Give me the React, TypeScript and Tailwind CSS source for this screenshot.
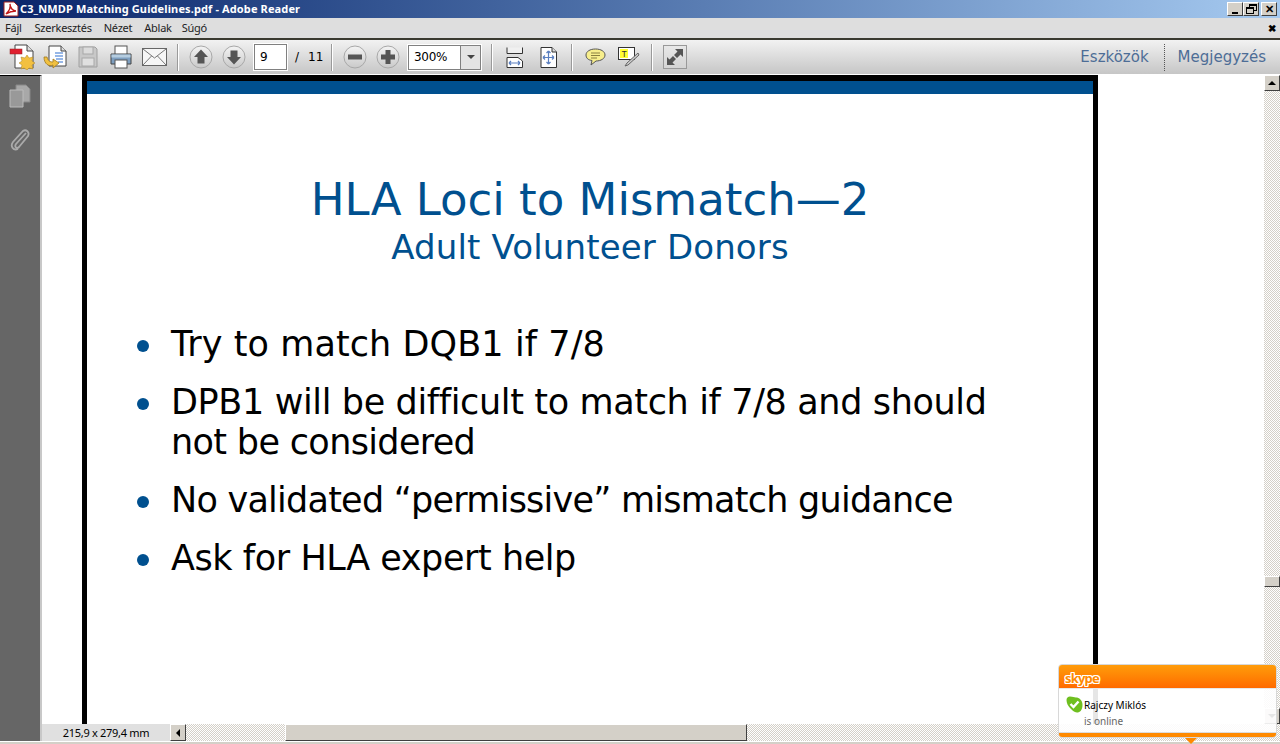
import React from 'react';

const checker = 'bg-[repeating-conic-gradient(#d4d0c8_0_25%,#ffffff_0_50%)] bg-[length:2px_2px]';
const raised = 'border border-t-white border-l-white border-r-[#404040] border-b-[#404040] bg-[#d4d0c8]';

const Sep: React.FC<{ ml: number }> = ({ ml }) => (
  <div className="w-[2px] h-[27px] bg-[#9a9a9a] border-r border-white" style={{ marginLeft: ml }} />
);

const RoundBtn: React.FC<{ kind: 'up' | 'down' | 'minus' | 'plus'; ml: number }> = ({ kind, ml }) => (
  <svg width="24" height="24" viewBox="0 0 24 24" style={{ marginLeft: ml }}>
    <defs>
      <linearGradient id="rb" x1="0" y1="0" x2="0" y2="1">
        <stop offset="0" stopColor="#f4f4f4" />
        <stop offset="1" stopColor="#c9c9c9" />
      </linearGradient>
    </defs>
    <circle cx="12" cy="12" r="11" fill="url(#rb)" stroke="#a8a8a8" />
    {kind === 'up' && <path d="M12 4.5 L19 12 H15.5 V18.5 H8.5 V12 H5 Z" fill="#555" />}
    {kind === 'down' && <path d="M12 19.5 L19 12 H15.5 V5.5 H8.5 V12 H5 Z" fill="#555" />}
    {kind === 'minus' && <rect x="5" y="9.5" width="14" height="5" fill="#555" />}
    {kind === 'plus' && <path d="M9.5 5 H14.5 V9.5 H19 V14.5 H14.5 V19 H9.5 V14.5 H5 V9.5 H9.5 Z" fill="#555" />}
  </svg>
);

const Toolbar = () => (
  <div className="h-[37px] shrink-0 border-t-2 border-[#3a3a30] bg-gradient-to-b from-[#f2f2f2] to-[#c6c6c6] border-b border-b-white flex items-center font-['DejaVu_Sans',sans-serif] text-[12px] text-black">
    {/* create */}
    <svg width="26" height="26" viewBox="0 0 26 26" className="ml-[9px]">
      <path d="M6 1 H18 L24 7 V24 H6 Z" fill="#fff" stroke="#444" />
      <path d="M18 1 V7 H24" fill="#ddd" stroke="#444" />
      <rect x="1" y="5" width="12" height="5" fill="#e02030" stroke="#902020" strokeWidth="0.5" />
      <path d="M18 11 L20 14 L24 13 L23 17 L26 19 L23 21 L24 25 L20 24 L18 26 L15 24 L12 25 L13 21 L10 19 L13 17 L12 13 L16 14 Z" fill="#f2c040" stroke="#a88020" strokeWidth="0.5" />
    </svg>
    {/* open */}
    <svg width="24" height="24" viewBox="0 0 24 24" className="ml-[8px]">
      <path d="M6 1 H18 L23 6 V21 H6 Z" fill="#fff" stroke="#444" />
      <path d="M18 1 V6 H23" fill="#ddd" stroke="#444" />
      <path d="M12 8 H20 M12 11 H20 M13 14 H20 M15 17 H20" stroke="#3070d0" strokeWidth="1.2" />
      <path d="M1 12 C1 19 6 22 10 20 V23 L16 18 L10 14 V17 C7 17 5 16 4 12 Z" fill="#f0c040" stroke="#a07820" strokeWidth="0.8" />
    </svg>
    {/* save (disabled) */}
    <svg width="20" height="22" viewBox="0 0 20 22" className="ml-[11px]">
      <path d="M1 1 H17 L19 3 V21 H1 Z" fill="#c8c8c8" stroke="#a0a0a0" />
      <rect x="5" y="1" width="10" height="7" fill="#dcdcdc" stroke="#a8a8a8" />
      <rect x="4" y="12" width="12" height="8" fill="#e0e0e0" stroke="#a8a8a8" />
    </svg>
    {/* print */}
    <svg width="24" height="24" viewBox="0 0 24 24" className="ml-[11px]">
      <rect x="6" y="1" width="12" height="9" fill="#fff" stroke="#555" />
      <path d="M2 9 H22 V19 H2 Z" fill="#7e9fc0" stroke="#444" />
      <rect x="2.5" y="9.5" width="19" height="3" fill="#b5cde0" />
      <rect x="6" y="15" width="12" height="8" fill="#fff" stroke="#555" />
    </svg>
    {/* mail */}
    <svg width="25" height="18" viewBox="0 0 25 18" className="ml-[9px]">
      <rect x="0.5" y="0.5" width="24" height="17" fill="#f6f6f6" stroke="#666" />
      <path d="M1 1 L12.5 10 L24 1 M1 17 L9.5 8 M24 17 L15.5 8" fill="none" stroke="#777" />
    </svg>
    <Sep ml={10} />
    <RoundBtn kind="up" ml={10} />
    <RoundBtn kind="down" ml={9} />
    <div className="ml-[8px] w-[33px] h-[26px] border border-[#808080] outline outline-1 outline-white bg-white pl-[5px] leading-[24px]">9</div>
    <span className="ml-[8px] w-[4px]">/</span>
    <span className="ml-[9px] w-[15px]">11</span>
    <Sep ml={8} />
    <RoundBtn kind="minus" ml={10} />
    <RoundBtn kind="plus" ml={9} />
    <div className="ml-[8px] w-[73px] h-[25px] border border-[#808080] outline outline-1 outline-white bg-white flex leading-[23px]">
      <span className="pl-[5px] w-[51px] tracking-[-0.3px]">300%</span>
      <div className="flex-1 border-l border-[#808080] bg-[#e4e4e4] flex items-center justify-center">
        <div className="w-0 h-0 border-x-[4px] border-x-transparent border-t-[4px] border-t-[#444]" />
      </div>
    </div>
    <Sep ml={10} />
    {/* fit width */}
    <svg width="18" height="21" viewBox="0 0 18 21" className="ml-[13px]">
      <path d="M1 0.5 V6.5 H16.5 V0.5" fill="#f0f0f0" stroke="#333" />
      <path d="M1 10.5 H12 L16.5 14 V20.5 H1 Z" fill="#fff" stroke="#333" />
      <path d="M3 16 H14 M3 16 L5 14 M3 16 L5 18 M14 16 L12 14 M14 16 L12 18" stroke="#5a7fc0" strokeWidth="1.2" fill="none" />
    </svg>
    {/* fit page */}
    <svg width="18" height="21" viewBox="0 0 18 21" className="ml-[16px]">
      <path d="M1 0.5 H12 L16.5 5 V20.5 H1 Z" fill="#fff" stroke="#333" />
      <path d="M12 0.5 V5 H16.5" fill="#ddd" stroke="#333" />
      <path d="M8.5 4 V17 M8.5 4 L6.5 6 M8.5 4 L10.5 6 M8.5 17 L6.5 15 M8.5 17 L10.5 15 M3 10.5 H14 M3 10.5 L5 8.5 M3 10.5 L5 12.5 M14 10.5 L12 8.5 M14 10.5 L12 12.5" stroke="#5a7fc0" strokeWidth="1.2" fill="none" />
    </svg>
    <Sep ml={13} />
    {/* comment */}
    <svg width="21" height="18" viewBox="0 0 21 18" className="ml-[12px]">
      <path d="M10.5 1 C16 1 20 3.5 20 7 C20 10.5 16 13 11 13 L6 17 L7 12.5 C3 12 1 10 1 7 C1 3.5 5 1 10.5 1 Z" fill="#f7ee8c" stroke="#555" />
      <path d="M6 5 H15 M6 7.5 H15 M6 10 H12" stroke="#8a8040" />
    </svg>
    {/* highlight */}
    <svg width="22" height="20" viewBox="0 0 22 20" className="ml-[12px]">
      <rect x="0.5" y="0.5" width="16" height="12" fill="#fff" stroke="#333" />
      <rect x="2" y="2" width="8" height="9" fill="#ffff30" />
      <text x="3.5" y="10" fontSize="9" fontFamily="Liberation Mono, monospace" fill="#333">T</text>
      <path d="M20 6 L9 16 L7 19 L10 18 L21 8 Z" fill="#ccc" stroke="#666" />
    </svg>
    <Sep ml={11} />
    {/* fullscreen */}
    <div className="ml-[10px] w-[24px] h-[24px] border border-[#999] bg-gradient-to-b from-[#e8e8e8] to-[#d4d4d4]">
      <svg width="22" height="22" viewBox="0 0 22 22">
        <path d="M11 3 H19 V11 L16.5 8.5 L13 12 L10 9 L13.5 5.5 Z M3 19 V11 L5.5 13.5 L9 10 L12 13 L8.5 16.5 L11 19 Z" fill="#555" />
      </svg>
    </div>
    <div className="ml-auto flex items-center text-[15px] text-[#4d6d96]">
      <span>Eszközök</span>
      <div className="ml-[15px] mr-[13px] h-[27px] border-l border-dotted border-[#555]" />
      <span className="mr-[14px]">Megjegyzés</span>
    </div>
  </div>
);

const SkypePopup = () => (
  <div className="absolute left-[1058px] top-[664px] w-[219px] h-[74px] rounded-[4px] border border-[#d8d8d8] bg-white/90 font-['Noto_Sans',sans-serif]">
    <div className="h-[24px] rounded-t-[3px] bg-gradient-to-b from-[#ff9c0a] to-[#ff6a00] border-b border-[#e8e8e8] pl-[6px]">
      <span className="text-[13px] leading-[18px] font-bold tracking-[-0.8px] text-[#ff8a00] [text-shadow:1px_0_0_#fff,-1px_0_0_#fff,0_1px_0_#fff,0_-1px_0_#fff,1px_1px_0_#fff,-1px_-1px_0_#fff,1px_-1px_0_#fff,-1px_1px_0_#fff]">skype</span>
    </div>
    <div className="flex pl-[7px] pt-[7px]">
      <svg width="17" height="17" viewBox="0 0 17 17">
        <path d="M4 0.5 C7 0.5 8 1.5 10 1.5 C13 1.5 16.5 4 16.5 9 C16.5 14 14 16.5 11 16.5 C8 16.5 6 14 4 12 C2 10 0.5 7 0.5 4 C0.5 2 2 0.5 4 0.5 Z" fill="#6fbf20" />
        <path d="M4.5 8 L7.5 11 L12.5 5.5" fill="none" stroke="#fff" strokeWidth="2.4" />
      </svg>
      <div className="ml-[1px] text-[10px] leading-[16px] mt-[1px]">
        <div className="text-black">Rajczy Miklós</div>
        <div className="text-[#666]">is online</div>
      </div>
    </div>
    <div className="absolute left-0 right-0 bottom-0 h-[5px] rounded-b-[3px] bg-[#ff8a00] border-t border-[#dcdcdc]" />
    <div className="absolute left-[126px] top-[73px] w-0 h-0 border-x-[6px] border-x-transparent border-t-[6px] border-t-[#ff8a00]" />
  </div>
);

const Bullet = () => <span className="w-[12px] h-[12px] mt-[16px] mr-[22px] rounded-full bg-[#00508f] shrink-0" />;

export default function App() {
  return (
    <div className="relative w-[1280px] h-[744px] overflow-hidden flex flex-col bg-[#d4d0c8]">
      <div className="h-[18px] shrink-0 bg-gradient-to-r from-[#0a246a] to-[#a6caf0] flex items-center justify-between font-['Noto_Sans',sans-serif]">
        <div className="flex items-center">
          <svg width="16" height="16" viewBox="0 0 16 16" className="ml-[3px]">
            <path d="M1 1 H11 L15 5 V15 H1 Z" fill="#fff" stroke="#a02020" />
            <path d="M3 13 C6 10 8 6 7 3 C7 7 10 10 13 10 C9 10 6 11 3 13 Z" fill="none" stroke="#c01818" strokeWidth="1.4" />
          </svg>
          <span className="ml-[1px] text-[11px] font-bold tracking-[0.12px] text-white">C3_NMDP Matching Guidelines.pdf - Adobe Reader</span>
        </div>
        <div className="flex items-center mr-[3px]">
          <div className={`w-[16px] h-[14px] ${raised} relative`}>
            <div className="absolute left-[4px] top-[9px] w-[6px] h-[2px] bg-black" />
          </div>
          <div className={`w-[16px] h-[14px] ${raised} relative`}>
            <div className="absolute left-[5px] top-[1px] w-[8px] h-[7px] border border-t-2 border-black" />
            <div className="absolute left-[2px] top-[4px] w-[8px] h-[7px] border border-t-2 border-black bg-[#d4d0c8]" />
          </div>
          <div className={`ml-[2px] w-[16px] h-[14px] ${raised} text-[11px] leading-[12px] text-center font-bold text-black`}>✕</div>
        </div>
      </div>
      <div className="h-[20px] shrink-0 bg-[#dedede] flex items-center justify-between font-['Noto_Sans',sans-serif] text-[11px] text-[#222]">
        <div className="flex gap-[12px] pl-[5px] tracking-[-0.25px]">
          <span className="mr-[1px]">Fájl</span><span>Szerkesztés</span><span>Nézet</span><span>Ablak</span><span className="ml-[-2px]">Súgó</span>
        </div>
        <span className="mr-[4px] text-[10px] font-bold text-black">✖</span>
      </div>
      <Toolbar />
      <div className="flex-1 min-h-0 flex">
        <div className="w-[42px] bg-[#666666] border-t border-t-black border-r-2 border-r-[#c8c8c8] flex flex-col items-center pt-[8px] gap-[19px] shrink-0">
          <svg width="22" height="24" viewBox="0 0 22 24">
            <path d="M7 1 H17 L21 5 V18 H7 Z" fill="#a8a8a8" stroke="#888" />
            <path d="M1 6 H14 V23 H1 Z" fill="#999" stroke="#bbb" />
          </svg>
          <svg width="20" height="24" viewBox="0 0 20 24">
            <path d="M16 6 L6 17 C4 20 7 22 9 20 L18 9 C20 5 16 2 13 4 L3 15 C0 19 3 24 8 22" fill="none" stroke="#aaa" strokeWidth="1.8" />
          </svg>
        </div>
        <div className="flex-1 min-w-0 flex flex-col">
          <div className="flex-1 min-h-0 flex">
            <div className="flex-1 min-w-0 bg-white pl-[40px] overflow-hidden">
              <div className="w-[1016px] h-[700px] border-x-[5px] border-t-[6px] border-black bg-white text-center font-['DejaVu_Sans',sans-serif]">
                <div className="h-[13px] bg-[#00508f]" />
                <div className="pt-[79px] text-[45px] leading-[54px] text-[#00508f]">HLA Loci to Mismatch—2</div>
                <div className="text-[34px] leading-[40px] tracking-[0.15px] text-[#00508f]">Adult Volunteer Donors</div>
                <ul className="mt-[57px] ml-[50px] text-left text-[35px] leading-[40px] text-black">
                  <li className="flex mb-[18px]"><Bullet /><span className="tracking-[0.08px]">Try to match DQB1 if 7/8</span></li>
                  <li className="flex mb-[18px]"><Bullet /><span className="tracking-[-0.36px]">DPB1 will be difficult to match if 7/8 and should<br /><span className="tracking-[-0.65px]">not be considered</span></span></li>
                  <li className="flex mb-[18px]"><Bullet /><span className="tracking-[-0.76px]">No validated “permissive” mismatch guidance</span></li>
                  <li className="flex"><Bullet /><span className="tracking-[-0.43px]">Ask for HLA expert help</span></li>
                </ul>
              </div>
            </div>
            <div className={`w-[16px] shrink-0 flex flex-col ${checker}`}>
              <div className={`h-[16px] ${raised} flex items-center justify-center`}>
                <div className="w-0 h-0 border-x-[4px] border-x-transparent border-b-[4px] border-b-black" />
              </div>
              <div className={`mt-[485px] h-[11px] ${raised}`} />
              <div className="flex-1" />
              <div className={`h-[16px] ${raised} flex items-center justify-center`}>
                <div className="w-0 h-0 border-x-[4px] border-x-transparent border-t-[4px] border-t-black" />
              </div>
            </div>
          </div>
          <div className="h-[17px] flex shrink-0">
            <div className="w-[128px] bg-[#e0e0e0] text-center font-['Noto_Sans',sans-serif] text-[11px] tracking-[-0.3px] leading-[17px] text-black">215,9 x 279,4 mm</div>
            <div className={`w-[16px] ${raised} flex items-center justify-center`}>
              <div className="w-0 h-0 border-y-[4px] border-y-transparent border-r-[4px] border-r-black" />
            </div>
            <div className={`flex-1 flex ${checker} pl-[99px]`}>
              <div className={`w-[462px] ${raised}`} />
            </div>
          </div>
        </div>
      </div>
      <div className="h-[3px] bg-[#d4d0c8] border-t border-white shrink-0" />
      <SkypePopup />
    </div>
  );
}
